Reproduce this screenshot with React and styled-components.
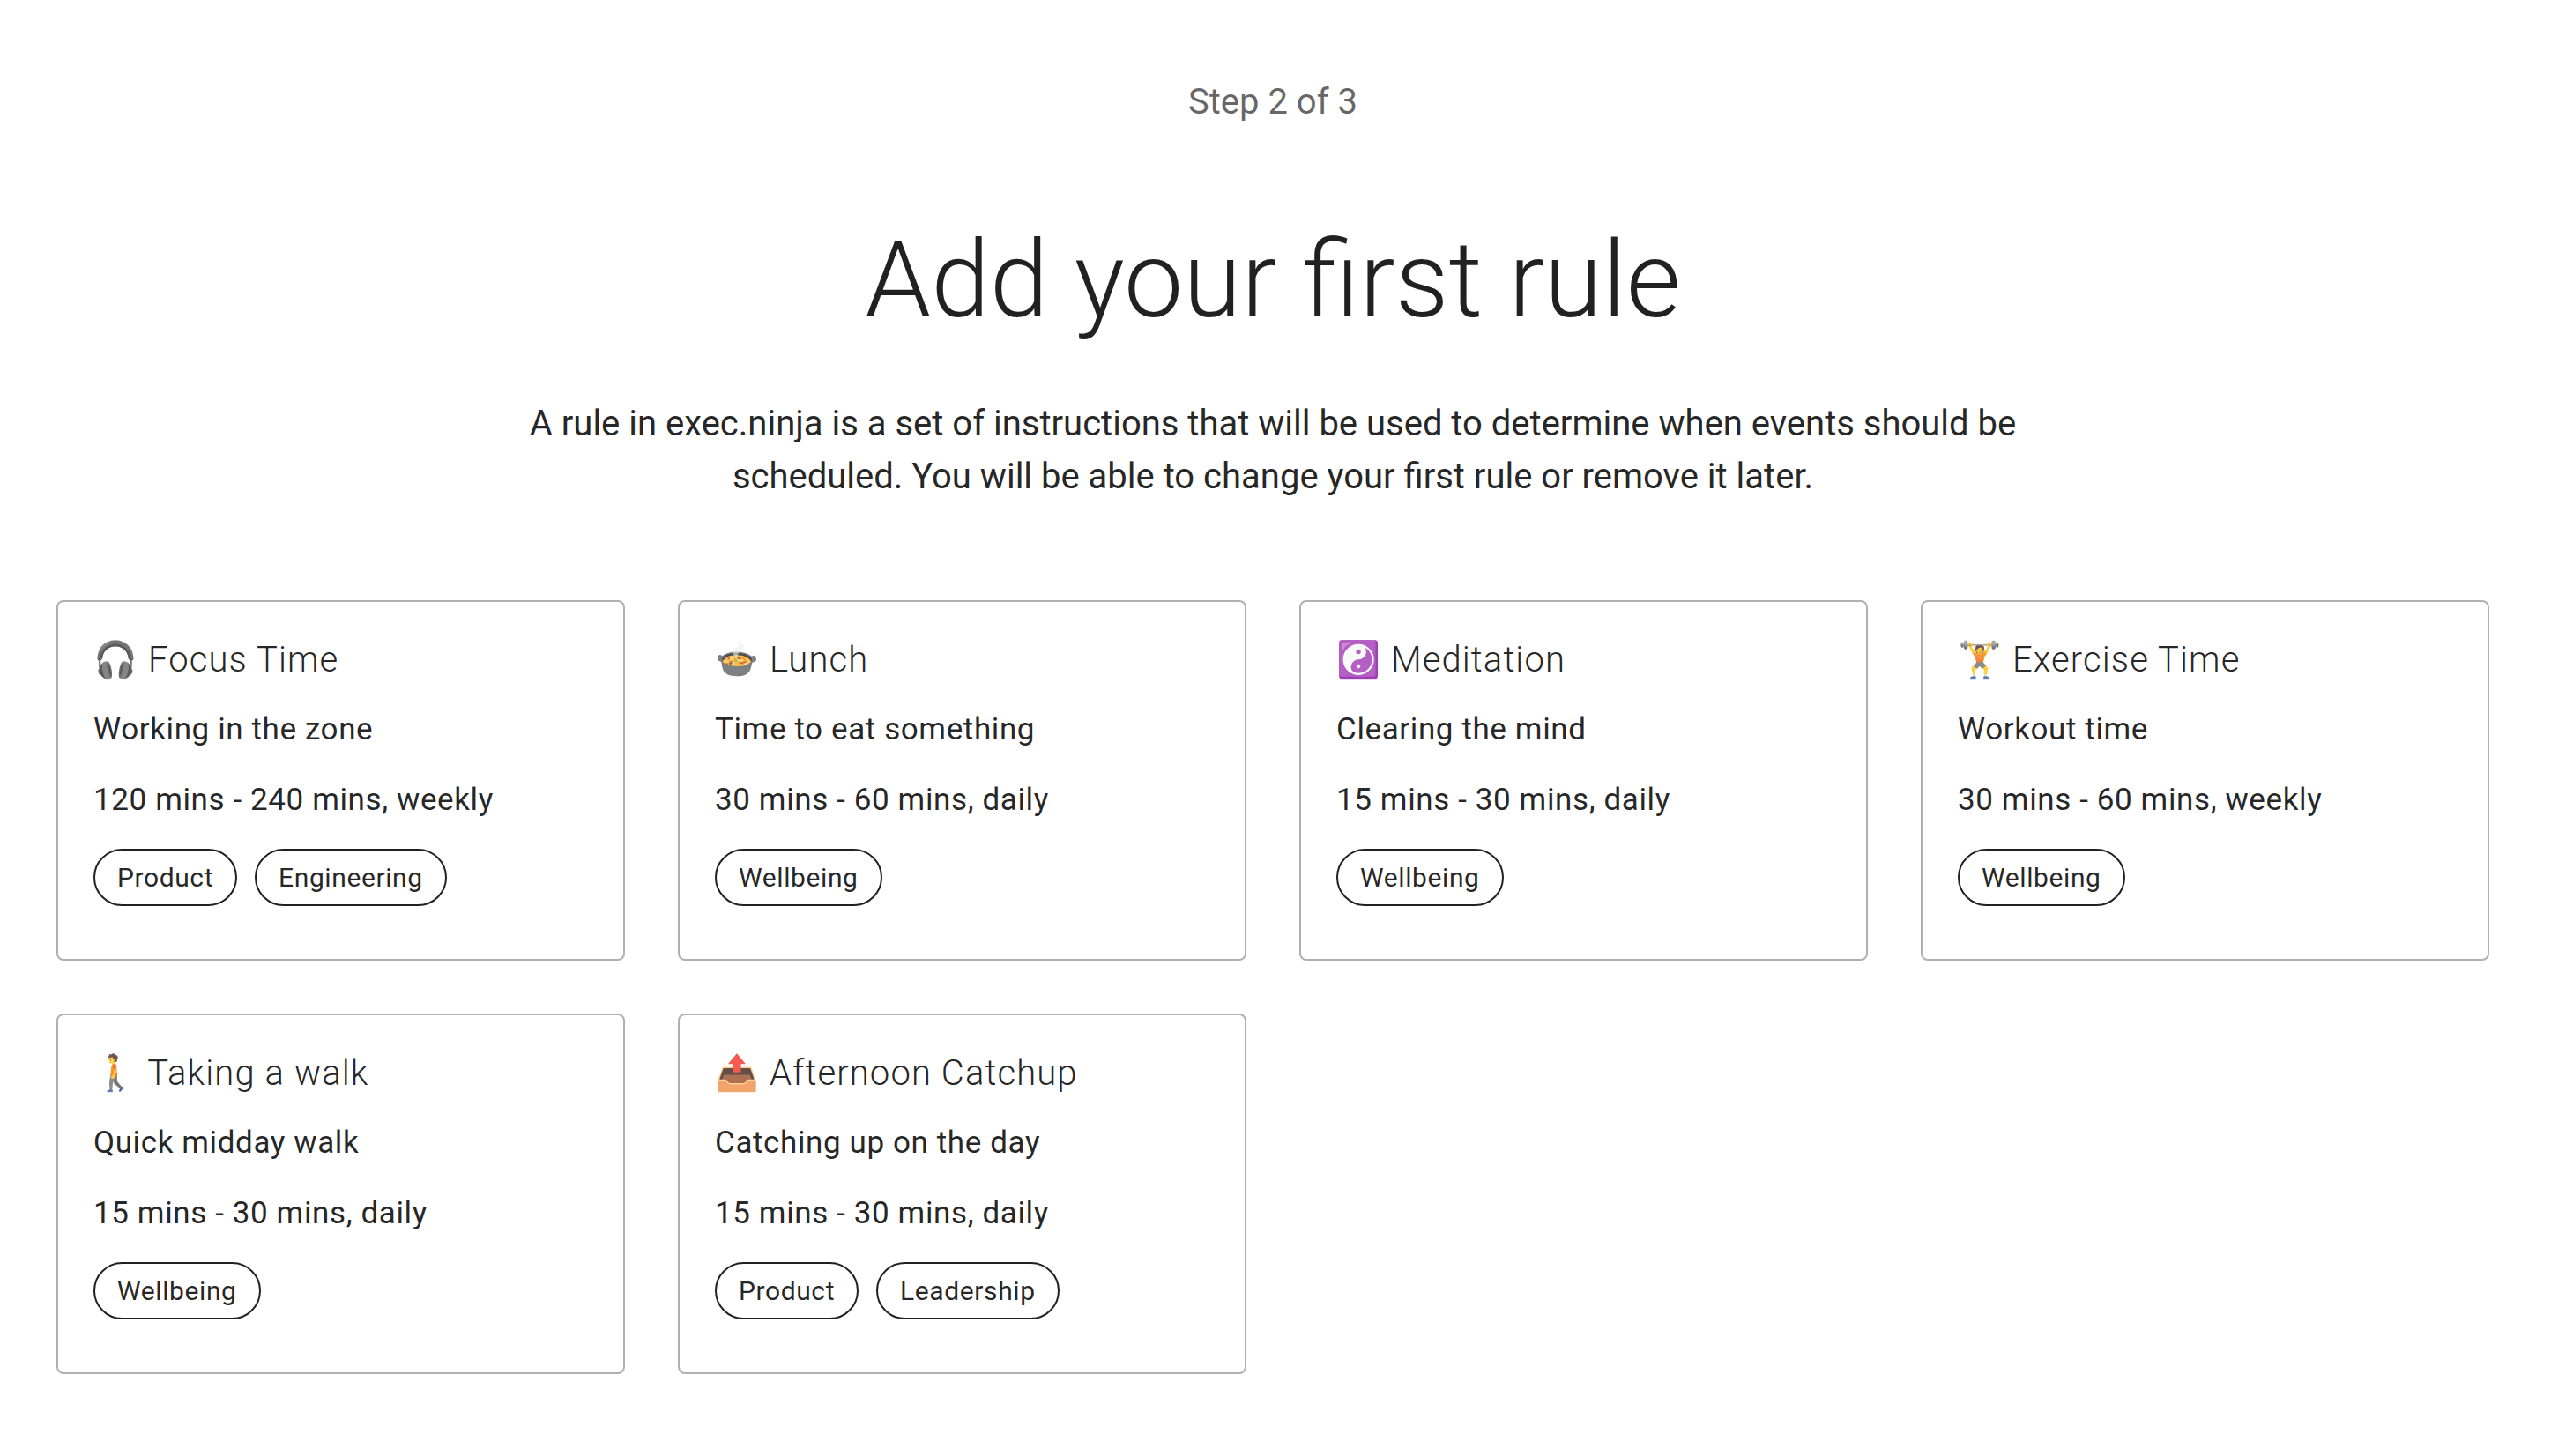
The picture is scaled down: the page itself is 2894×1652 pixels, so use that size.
import React from "react";
import styled, { createGlobalStyle } from "styled-components";

const rules = [
  {
    icon: "🎧",
    name: "Focus Time",
    description: "Working in the zone",
    schedule: "120 mins - 240 mins, weekly",
    tags: ["Product", "Engineering"],
  },
  {
    icon: "🍲",
    name: "Lunch",
    description: "Time to eat something",
    schedule: "30 mins - 60 mins, daily",
    tags: ["Wellbeing"],
  },
  {
    icon: "☯️",
    name: "Meditation",
    description: "Clearing the mind",
    schedule: "15 mins - 30 mins, daily",
    tags: ["Wellbeing"],
  },
  {
    icon: "🏋️",
    name: "Exercise Time",
    description: "Workout time",
    schedule: "30 mins - 60 mins, weekly",
    tags: ["Wellbeing"],
  },
  {
    icon: "🚶",
    name: "Taking a walk",
    description: "Quick midday walk",
    schedule: "15 mins - 30 mins, daily",
    tags: ["Wellbeing"],
  },
  {
    icon: "📤",
    name: "Afternoon Catchup",
    description: "Catching up on the day",
    schedule: "15 mins - 30 mins, daily",
    tags: ["Product", "Leadership"],
  },
];

function App() {
  return (
    <Page>
      <GlobalStyle />
      <Step>Step 2 of 3</Step>
      <Title>Add your first rule</Title>
      <Intro>
        A rule in exec.ninja is a set of instructions that will be used to
        determine when events should be scheduled. You will be able to change
        your first rule or remove it later.
      </Intro>
      <Grid>
        {rules.map((rule) => (
          <Card key={rule.name}>
            <CardTitle>
              {rule.icon} {rule.name}
            </CardTitle>
            <CardText>{rule.description}</CardText>
            <CardText>{rule.schedule}</CardText>
            <Tags>
              {rule.tags.map((tag) => (
                <Tag key={tag}>{tag}</Tag>
              ))}
            </Tags>
          </Card>
        ))}
      </Grid>
    </Page>
  );
}

const GlobalStyle = createGlobalStyle`
  * {
    box-sizing: border-box;
  }

  body {
    margin: 0;
    background-color: #fff;
    color: rgba(0, 0, 0, 0.87);
    font-family: Roboto, sans-serif;
    -webkit-font-smoothing: antialiased;
  }
`;

const Page = styled.main`
  display: flex;
  flex-direction: column;
  align-items: center;
  min-height: 1652px;
  padding: 86px 70px 0 64px;
`;

const Step = styled.p`
  margin: 0;
  color: rgba(0, 0, 0, 0.6);
  font-size: 40px;
  line-height: 60px;
`;

const Title = styled.h1`
  margin: 100px 0 0;
  font-size: 120px;
  font-weight: 300;
  line-height: 144px;
`;

const Intro = styled.p`
  width: 1720px;
  margin: 61px 0 0;
  font-size: 40px;
  line-height: 60px;
  text-align: center;
`;

const Grid = styled.section`
  display: grid;
  grid-template-columns: repeat(4, 645px);
  gap: 60px;
  margin-top: 110px;
`;

const Card = styled.article`
  height: 409px;
  padding: 34px 40px;
  border: 2px solid #b0b0b0;
  border-radius: 8px;
`;

const CardTitle = styled.h2`
  height: 63px;
  margin: 0;
  font-size: 40px;
  font-weight: 300;
  line-height: 63px;
  letter-spacing: 1.1px;
`;

const CardText = styled.p`
  margin: 17px 0 0;
  font-size: 35px;
  line-height: 61px;
  letter-spacing: 0.61px;

  & + & {
    margin-top: 19px;
  }
`;

const Tags = styled.div`
  display: flex;
  gap: 20px;
  margin-top: 25px;
`;

const Tag = styled.span`
  height: 65px;
  padding: 0 25px;
  border: 2px solid #212121;
  border-radius: 33px;
  font-size: 30px;
  line-height: 61px;
  letter-spacing: 0.6px;
`;

export default App;
